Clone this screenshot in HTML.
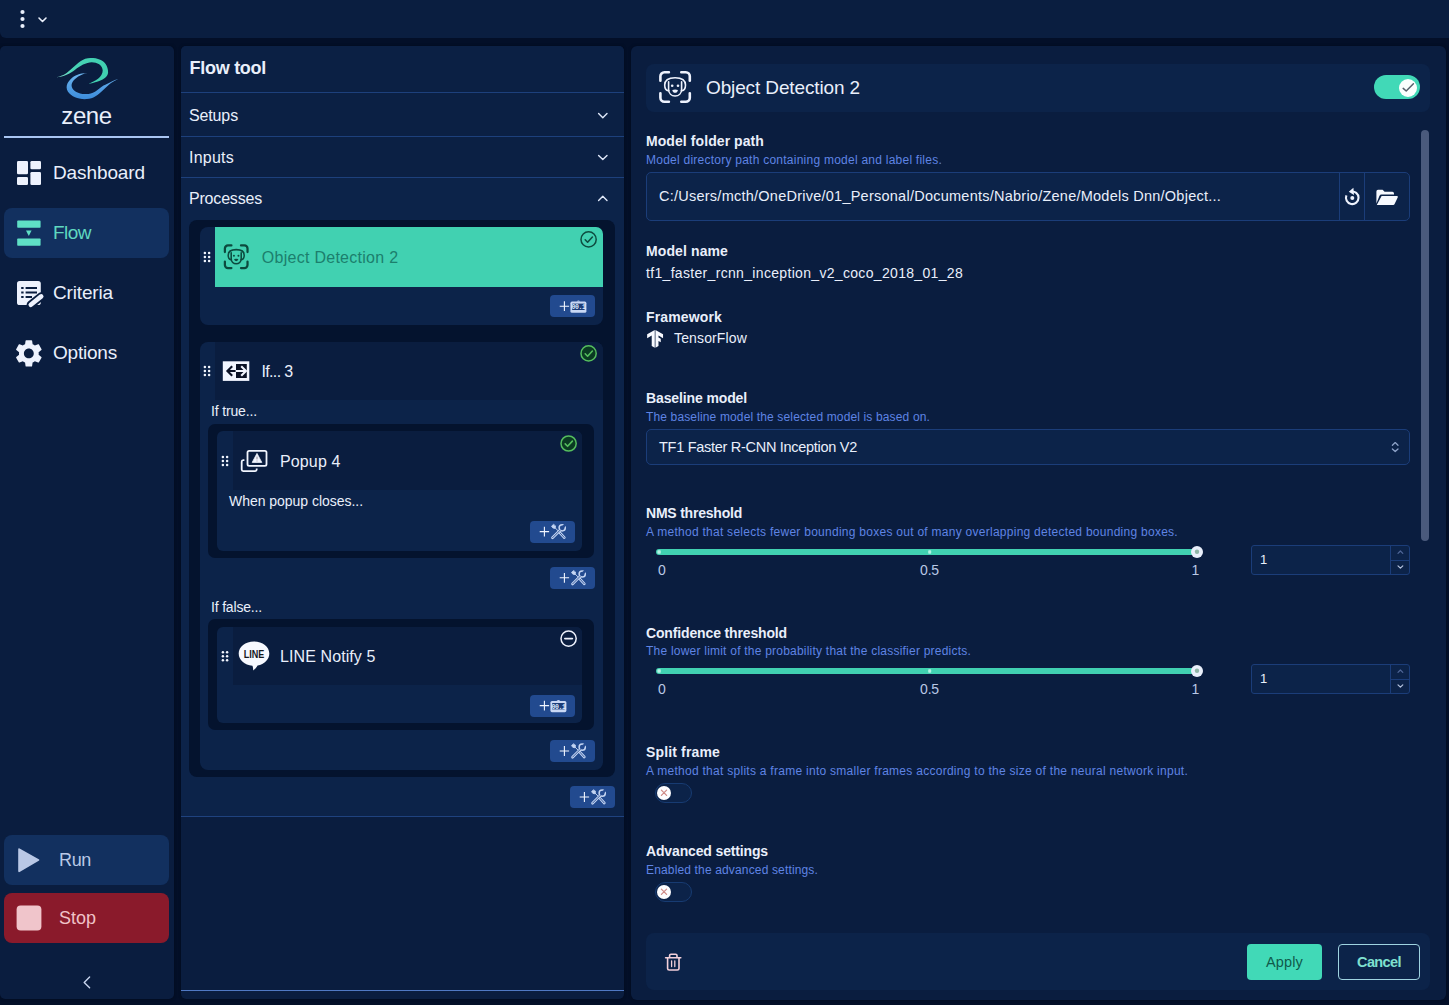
<!DOCTYPE html>
<html lang="en"><head><meta charset="utf-8"><title>Zene - Flow tool</title>
<style>
*{box-sizing:border-box;margin:0;padding:0}
html,body{width:1449px;height:1005px;overflow:hidden}
body{background:#030f28;font-family:"Liberation Sans",sans-serif;position:relative}
.b{position:absolute}
.t{position:absolute;white-space:nowrap}
svg{position:absolute;overflow:visible}
#zene{left:61.3px;top:101.2px;font-size:24px;line-height:29px;color:#e9effb;font-weight:400;letter-spacing:-0.387px}
#n1{left:53px;top:160.5px;font-size:19px;line-height:23px;color:#e9effb;font-weight:400;letter-spacing:-0.106px}
#n2{left:53px;top:220.5px;font-size:19px;line-height:23px;color:#5fd8c0;font-weight:400;letter-spacing:-0.531px}
#n3{left:53px;top:280.5px;font-size:19px;line-height:23px;color:#e9effb;font-weight:400;letter-spacing:-0.154px}
#n4{left:53px;top:340.5px;font-size:19px;line-height:23px;color:#e9effb;font-weight:400;letter-spacing:-0.212px}
#run{left:59px;top:849.0px;font-size:18px;line-height:22px;color:#b9c8e6;font-weight:400;letter-spacing:-0.344px}
#stop{left:59px;top:907.0px;font-size:18px;line-height:22px;color:#f0c3c8;font-weight:400;letter-spacing:-0.008px}
#ft{left:189.6px;top:56.8px;font-size:18px;line-height:22px;color:#e9effb;font-weight:700;letter-spacing:-0.287px}
#s1{left:189px;top:105.5px;font-size:16px;line-height:19px;color:#e9effb;font-weight:400;letter-spacing:-0.135px}
#s2{left:189px;top:147.5px;font-size:16px;line-height:19px;color:#e9effb;font-weight:400;letter-spacing:0.234px}
#s3{left:189px;top:188.5px;font-size:16px;line-height:19px;color:#e9effb;font-weight:400;letter-spacing:-0.189px}
#p1{left:261.8px;top:247.5px;font-size:16px;line-height:19px;color:#1c7f6d;font-weight:400;letter-spacing:0.271px}
#p2{left:261.5px;top:361.5px;font-size:16px;line-height:19px;color:#e9effb;font-weight:400;letter-spacing:-0.654px}
#p3{left:211px;top:402.5px;font-size:14px;line-height:17px;color:#e9effb;font-weight:400;letter-spacing:-0.147px}
#p4{left:280px;top:451.5px;font-size:16px;line-height:19px;color:#e9effb;font-weight:400;letter-spacing:0.127px}
#p5{left:229px;top:492.5px;font-size:14px;line-height:17px;color:#e9effb;font-weight:400;letter-spacing:-0.032px}
#p6{left:211px;top:598.5px;font-size:14px;line-height:17px;color:#e9effb;font-weight:400;letter-spacing:-0.175px}
#p7{left:280px;top:646.5px;font-size:16px;line-height:19px;color:#e9effb;font-weight:400;letter-spacing:0.095px}
#h1{left:706px;top:75.7px;font-size:19px;line-height:23px;color:#e9effb;font-weight:400;letter-spacing:-0.128px}
#l1{left:646px;top:132.5px;font-size:14px;line-height:17px;color:#e9effb;font-weight:700;letter-spacing:0.078px}
#d1{left:646px;top:152.8px;font-size:12px;line-height:14px;color:#5f84e4;font-weight:400;letter-spacing:0.244px}
#v1{left:659px;top:187.5px;font-size:14.5px;line-height:17px;color:#e9effb;font-weight:400;letter-spacing:0.245px}
#l2{left:646px;top:242.5px;font-size:14px;line-height:17px;color:#e9effb;font-weight:700;letter-spacing:0.109px}
#v2{left:646px;top:264.5px;font-size:14px;line-height:17px;color:#e9effb;font-weight:400;letter-spacing:0.323px}
#l3{left:646px;top:308.5px;font-size:14px;line-height:17px;color:#e9effb;font-weight:700;letter-spacing:0.144px}
#v3{left:674px;top:329.5px;font-size:14px;line-height:17px;color:#e9effb;font-weight:400;letter-spacing:0.141px}
#l4{left:646px;top:389.5px;font-size:14px;line-height:17px;color:#e9effb;font-weight:700;letter-spacing:-0.122px}
#d4{left:646px;top:409.8px;font-size:12px;line-height:14px;color:#5f84e4;font-weight:400;letter-spacing:0.143px}
#v4{left:659px;top:438.5px;font-size:14.5px;line-height:17px;color:#e9effb;font-weight:400;letter-spacing:-0.286px}
#l5{left:646px;top:504.5px;font-size:14px;line-height:17px;color:#e9effb;font-weight:700;letter-spacing:-0.214px}
#d5{left:646px;top:524.8px;font-size:12px;line-height:14px;color:#5f84e4;font-weight:400;letter-spacing:0.267px}
#t50{left:658px;top:561.5px;font-size:14px;line-height:17px;color:#b9c8e6;font-weight:400;letter-spacing:0.000px}
#t55{left:920px;top:561.5px;font-size:14px;line-height:17px;color:#b9c8e6;font-weight:400;letter-spacing:-0.156px}
#t51{left:1191.6px;top:561.5px;font-size:14px;line-height:17px;color:#b9c8e6;font-weight:400;letter-spacing:0.000px}
#n5{left:1260px;top:552.0px;font-size:13px;line-height:16px;color:#e9effb;font-weight:400;letter-spacing:0.000px}
#l6{left:646px;top:624.7px;font-size:14px;line-height:17px;color:#e9effb;font-weight:700;letter-spacing:-0.145px}
#d6{left:646px;top:643.8px;font-size:12px;line-height:14px;color:#5f84e4;font-weight:400;letter-spacing:0.222px}
#t60{left:658px;top:680.5px;font-size:14px;line-height:17px;color:#b9c8e6;font-weight:400;letter-spacing:0.000px}
#t65{left:920px;top:680.5px;font-size:14px;line-height:17px;color:#b9c8e6;font-weight:400;letter-spacing:-0.156px}
#t61{left:1191.6px;top:680.5px;font-size:14px;line-height:17px;color:#b9c8e6;font-weight:400;letter-spacing:0.000px}
#n6{left:1260px;top:671.0px;font-size:13px;line-height:16px;color:#e9effb;font-weight:400;letter-spacing:0.000px}
#l7{left:646px;top:743.5px;font-size:14px;line-height:17px;color:#e9effb;font-weight:700;letter-spacing:0.149px}
#d7{left:646px;top:763.8px;font-size:12px;line-height:14px;color:#5f84e4;font-weight:400;letter-spacing:0.274px}
#l8{left:646px;top:842.5px;font-size:14px;line-height:17px;color:#e9effb;font-weight:700;letter-spacing:-0.146px}
#d8{left:646px;top:862.8px;font-size:12px;line-height:14px;color:#5f84e4;font-weight:400;letter-spacing:0.151px}
#ap{left:1266px;top:953.5px;font-size:14.5px;line-height:17px;color:#105a4b;font-weight:400;letter-spacing:0.144px}
#ca{left:1357px;top:953.5px;font-size:14.5px;line-height:17px;color:#7fe0cf;font-weight:700;letter-spacing:-0.594px}
</style></head><body>
<!-- top bar -->
<div class="b" style="left:0;top:0;width:1449px;height:38px;background:#0a1e40;border-radius:0 0 0 6px"></div>
<svg style="left:18px;top:8px" width="34" height="24" viewBox="0 0 34 24"><g fill="#e9effb"><circle cx="4.5" cy="4" r="2.1"/><circle cx="4.5" cy="11" r="2.1"/><circle cx="4.5" cy="18" r="2.1"/></g><path d="M21 10 L24.5 13.5 L28 10" fill="none" stroke="#e9effb" stroke-width="1.6" stroke-linecap="round" stroke-linejoin="round"/></svg>

<!-- sidebar -->
<div class="b" style="left:0;top:46px;width:173.5px;height:953px;background:#0a1d3f;border-radius:5px;box-shadow:0 0 3px rgba(2,10,28,.9)"></div>
<div class="b" style="left:4px;top:136px;width:165px;height:2px;background:#a9c5f2"></div>
<div class="b" style="left:4px;top:208px;width:165px;height:50px;background:#12305f;border-radius:8px"></div>
<div class="b" style="left:4px;top:835px;width:165px;height:50px;background:#12305f;border-radius:8px"></div>
<div class="b" style="left:4px;top:893px;width:165px;height:50px;background:#8a1a2b;border-radius:8px"></div>

<!-- flow tool panel -->
<div class="b" style="left:181px;top:46px;width:442.5px;height:953px;background:#0a1d3f;border-radius:5px;box-shadow:0 0 3px rgba(2,10,28,.9)"></div>
<div class="b" style="left:181px;top:46px;width:442.5px;height:132px;background:#0b2044;border-radius:5px 5px 0 0"></div>
<div class="b" style="left:181px;top:92px;width:442.5px;height:1px;background:#1d407c"></div>
<div class="b" style="left:181px;top:136px;width:442.5px;height:1px;background:#1d407c"></div>
<div class="b" style="left:181px;top:177px;width:442.5px;height:1px;background:#1d407c"></div>
<div class="b" style="left:181px;top:178px;width:442.5px;height:638px;background:#0c2349"></div>
<div class="b" style="left:181px;top:816px;width:442.5px;height:1px;background:#1f427f"></div>
<div class="b" style="left:181px;top:990px;width:442.5px;height:1px;background:#5079c4"></div>
<!-- processes dark container -->
<div class="b" style="left:189px;top:220px;width:425.5px;height:557px;background:#04132e;border-radius:8px"></div>
<!-- card 1 -->
<div class="b" style="left:199.5px;top:227px;width:403.5px;height:98px;background:#0c2349;border-radius:8px"></div>
<div class="b" style="left:215px;top:227px;width:388px;height:60px;background:#41d1b1;border-radius:0 7px 0 0"></div>
<div class="b btn" style="left:550px;top:295px;width:45px;height:22px;background:#224a8f;border-radius:4px"></div>
<!-- card 2 (If) -->
<div class="b" style="left:199.5px;top:342px;width:403.5px;height:427.5px;background:#0c2349;border-radius:8px"></div>
<div class="b" style="left:215px;top:342px;width:388px;height:57.5px;background:#0a1d3f;border-radius:0 8px 0 0"></div>
<!-- if true container -->
<div class="b" style="left:208px;top:424px;width:386px;height:133.5px;background:#04132e;border-radius:7px"></div>
<div class="b" style="left:217px;top:431px;width:365px;height:120px;background:#0c2349;border-radius:6px"></div>
<div class="b" style="left:233px;top:431px;width:349px;height:59px;background:#0a1d3f;border-radius:0 6px 0 0"></div>
<div class="b btn" style="left:530px;top:521px;width:45px;height:22px;background:#224a8f;border-radius:4px"></div>
<div class="b btn" style="left:550px;top:567px;width:45px;height:22px;background:#224a8f;border-radius:4px"></div>
<!-- if false container -->
<div class="b" style="left:208px;top:619px;width:386px;height:111px;background:#04132e;border-radius:7px"></div>
<div class="b" style="left:217px;top:627px;width:365px;height:96px;background:#0c2349;border-radius:6px"></div>
<div class="b" style="left:233px;top:627px;width:349px;height:58px;background:#0a1d3f;border-radius:0 6px 0 0"></div>
<div class="b btn" style="left:530px;top:695px;width:45px;height:22px;background:#224a8f;border-radius:4px"></div>
<div class="b btn" style="left:550px;top:740px;width:45px;height:22px;background:#224a8f;border-radius:4px"></div>
<div class="b btn" style="left:570px;top:786px;width:45px;height:22px;background:#224a8f;border-radius:4px"></div>

<!-- right panel -->
<div class="b" style="left:631px;top:46px;width:814.5px;height:953.5px;background:#0a1d3f;border-radius:6px;box-shadow:0 0 3px rgba(2,10,28,.9)"></div>
<div class="b" style="left:646px;top:64px;width:784px;height:48px;background:#0c2349;border-radius:8px"></div>
<div class="b" style="left:646px;top:933px;width:784px;height:57px;background:#0c2349;border-radius:8px"></div>
<!-- scrollbar -->
<div class="b" style="left:1421px;top:129.5px;width:8px;height:411px;background:#4a5a7c;border-radius:4px"></div>
<!-- path input -->
<div class="b" style="left:646px;top:172px;width:764px;height:49px;background:#0c2349;border:1px solid #1b3d79;border-radius:5px"></div>
<div class="b" style="left:1339px;top:172px;width:1px;height:49px;background:#1b3d79"></div>
<div class="b" style="left:1364px;top:172px;width:1px;height:49px;background:#1b3d79"></div>
<!-- select -->
<div class="b" style="left:646px;top:429px;width:764px;height:36px;background:#0c2349;border:1px solid #1b3d79;border-radius:5px"></div>
<!-- sliders -->
<div class="b" style="left:656px;top:549px;width:541px;height:6px;background:#41d1b1;border-radius:3px"></div>
<div class="b" style="left:656px;top:668px;width:541px;height:6px;background:#41d1b1;border-radius:3px"></div>
<div class="b" style="left:1191px;top:546px;width:12px;height:12px;background:#e9effb;border-radius:6px"></div>
<div class="b" style="left:1191px;top:665px;width:12px;height:12px;background:#e9effb;border-radius:6px"></div>
<!-- number inputs -->
<div class="b" style="left:1251px;top:545px;width:159px;height:30px;background:#0c2349;border:1px solid #1b3d79;border-radius:3px"></div>
<div class="b" style="left:1251px;top:664px;width:159px;height:30px;background:#0c2349;border:1px solid #1b3d79;border-radius:3px"></div>
<!-- toggles -->
<div class="b" style="left:1374px;top:75px;width:46px;height:24px;background:#41d9b7;border-radius:12px"></div>
<div class="b" style="left:1399px;top:78.5px;width:18px;height:18px;background:#fbfffe;border-radius:9px"></div>
<div class="b" style="left:654.5px;top:783px;width:37.5px;height:20px;background:#0c2349;border:1px solid #173b72;border-radius:10px"></div>
<div class="b" style="left:656.8px;top:785.5px;width:14.4px;height:14.4px;background:#fdfdff;border-radius:8px"></div>
<div class="b" style="left:654.5px;top:882px;width:37.5px;height:20px;background:#0c2349;border:1px solid #173b72;border-radius:10px"></div>
<div class="b" style="left:656.8px;top:884.5px;width:14.4px;height:14.4px;background:#fdfdff;border-radius:8px"></div>
<!-- spinner dividers -->
<div class="b" style="left:1390px;top:545px;width:1px;height:30px;background:#1b3d79"></div>
<div class="b" style="left:1390px;top:559.5px;width:20px;height:1px;background:#1b3d79"></div>
<div class="b" style="left:1390px;top:664px;width:1px;height:30px;background:#1b3d79"></div>
<div class="b" style="left:1390px;top:678.5px;width:20px;height:1px;background:#1b3d79"></div>
<!-- buttons -->
<div class="b" style="left:1247px;top:944px;width:75px;height:36px;background:#41d9b7;border-radius:4px"></div>
<div class="b" style="left:1338px;top:944px;width:82px;height:36px;border:1px solid #9fd3e0;border-radius:4px"></div>
<svg width="1449" height="1005" viewBox="0 0 1449 1005" style="left:0;top:0">
<defs>
<linearGradient id="gt" x1="0" y1="0" x2="1" y2="0"><stop offset="0" stop-color="#8fe3d2"/><stop offset="0.35" stop-color="#48d3b5"/><stop offset="1" stop-color="#3fd0b0"/></linearGradient>
<linearGradient id="gb" x1="0" y1="0" x2="0" y2="1"><stop offset="0" stop-color="#6db5ee"/><stop offset="1" stop-color="#3c8cdb"/></linearGradient>
<!-- drag handle -->
<g id="drag" fill="#f2f6ff"><circle cx="-2.1" cy="-4" r="1.25"/><circle cx="2.1" cy="-4" r="1.25"/><circle cx="-2.1" cy="0" r="1.25"/><circle cx="2.1" cy="0" r="1.25"/><circle cx="-2.1" cy="4" r="1.25"/><circle cx="2.1" cy="4" r="1.25"/></g>
<!-- object detection icon: 32px box centered 0,0 -->
<g id="odb" fill="none" stroke-linecap="round" stroke-linejoin="round"><path d="M-14.7,-6.2V-10.7A4,4 0 0 1 -10.7,-14.7H-6.2"/><path d="M14.7,-6.2V-10.7A4,4 0 0 0 10.7,-14.7H6.2"/><path d="M-14.7,6.2V10.7A4,4 0 0 0 -10.7,14.7H-6.2"/><path d="M14.7,6.2V10.7A4,4 0 0 1 10.7,14.7H6.2"/></g>
<g id="odh" fill="none" stroke-linecap="round" stroke-linejoin="round"><path d="M-6.4,3.6C-9,4 -10.4,1.5 -10.4,-2C-10.4,-7 -6,-9.3 0,-9.3C6,-9.3 10.4,-7 10.4,-2C10.4,1.5 9,4 6.4,3.6"/><path d="M-6.5,-5.2V2.2C-6.5,6.5 -3.5,9 0,9C3.5,9 6.5,6.5 6.5,2.2V-5.2"/></g>
<g id="odf"><circle cx="-2.9" cy="-1.3" r="1.3"/><circle cx="2.9" cy="-1.3" r="1.3"/><path d="M-2.8,2.9Q0,2 2.8,2.9Q2.4,5.7 0,5.7Q-2.4,5.7 -2.8,2.9Z"/></g>
<!-- plus -->
<path id="plus" d="M-4.7,0H4.7M0,-4.9V4.9" stroke="#f2f6ff" stroke-width="1.1" fill="none"/>
<!-- tools icon 16x16 centered -->
<g id="tools" fill="none" stroke="#c5d5f3" stroke-linecap="round" stroke-linejoin="round">
<path d="M0.6,0.6L5.6,6" stroke-width="2.7"/>
<path d="M0.9,0.9L5.5,5.9" stroke="#244b91" stroke-width="0.9"/>
<path d="M-0.6,-0.8L-4.2,-4.4" stroke-width="1"/>
<path d="M-5.4,-7L-7.2,-5.4L-5.8,-3.6L-3.6,-3.2L-3.2,-5.4Z" stroke-width="0.8" fill="#c5d5f3"/>
<path d="M-6.2,6.2L1.4,-1.4" stroke-width="2.7"/>
<circle cx="3.5" cy="-3.8" r="3.1" stroke-width="1.5" fill="#244b91"/>
<path d="M-6.1,6.1L1.6,-1.6" stroke="#244b91" stroke-width="0.9"/>
<path d="M3.9,-4.2L7.4,-7.7" stroke="#244b91" stroke-width="2.6" stroke-linecap="butt"/>
</g>
<!-- counter icon -->
<g id="cnt"><path d="M-1.8,-5.6Q0,-7.6 1.8,-5.6Z" fill="#c9d8f5"/><rect x="-8" y="-5.6" width="16" height="11.2" rx="1.6" fill="#c9d8f5"/><rect x="-6.2" y="-3.6" width="12.4" height="6.4" fill="#1b3c78"/><text x="0" y="2" font-family="Liberation Mono, monospace" font-size="6.5" font-weight="700" fill="#dfe8fb" text-anchor="middle" letter-spacing="-0.4">00.1</text></g>
<!-- check circle -->
<g id="ok" fill="none" stroke-linecap="round" stroke-linejoin="round"><circle r="7.6" stroke-width="1.5"/><path d="M-3.4,0.4L-1,2.8L3.8,-2.4" stroke-width="1.6"/></g>
</defs>

<!-- logo -->
<path d="M55.9,77.3C60,76.5 63,75 65.1,73.9C69,71.5 75,65 80.1,61.4C83.5,59 87,57.9 90.5,57.9C94,57.9 97.5,58.3 100.2,59.7C104.5,61.5 108.2,66 108.1,72.2C108,77 103,80 95.1,82.3C93,83 91,83.5 88.5,83.8C95,81.5 102.7,77 102.7,70.6C102.7,65 97,62.2 91.8,62.2C86,62.2 80,66 75.1,69.7C70,73.5 64,76.8 55.9,77.3Z" fill="url(#gt)"/>
<path d="M87.6,73.1C83,73.2 80,73.8 77.6,74.7C74,76 71.5,78 70.1,79.7C68,82 66.6,84.5 66.6,87.3C66.6,90.5 68.5,93 70.9,94.8C73.5,97 76.5,98 79.3,98.5C81.5,99 84,99.3 86.8,99.1C90,98.9 93,97.8 95.1,96.5C98.5,94.6 101,92 103.5,89.8C106,87.6 108.5,85 111,83.1C113.5,81.3 116,80 118.5,79.1C116,79.6 113.8,80.4 111.8,81.4C108.5,83 106,84.2 103.5,85.6C101,87.3 99,89.2 96.8,90.6C94.5,92.3 91.5,93.6 88.5,93.9C85.5,94.2 82.5,94.2 80.1,93.5C77.5,92.8 75,91.6 73.4,89.8C72,88.3 71.5,86.6 71.6,84.8C71.8,82.5 73.2,80.6 75.1,78.9C77,77.2 79.2,75.8 81.8,74.7C83.8,73.9 85.6,73.4 87.6,73.1Z" fill="url(#gb)"/>

<!-- nav icons -->
<g fill="#eef2fd"><rect x="17" y="161" width="11" height="13.2" rx="1.3"/><rect x="17" y="177" width="11" height="8" rx="1.3"/><rect x="30.4" y="161" width="10.6" height="8.2" rx="1.3"/><rect x="30.4" y="172" width="10.6" height="13" rx="1.3"/></g>
<g fill="#5fe0c5"><rect x="17.2" y="220.6" width="23.4" height="7.2" rx="0.8"/><rect x="17.2" y="238.4" width="23.4" height="7.4" rx="0.8"/><path d="M26,230.6H31.6L28.8,236Z"/></g>
<!-- criteria -->
<g><rect x="17" y="281" width="23.8" height="24" rx="2.6" fill="#eef2fd"/>
<g stroke="#0a1d3f" stroke-width="2.2" fill="none"><path d="M21.2,288H23.6M25.6,288H37M21.2,292.5H23.6M25.6,292.5H37M21.2,297H23.6M25.6,297H32"/></g>
<path d="M30.8,304.8L41.2,296.4" stroke="#0a1d3f" stroke-width="8.4" stroke-linecap="round"/>
<path d="M30.8,304.8L41.2,296.4" stroke="#eef2fd" stroke-width="4.6" stroke-linecap="round"/></g>
<!-- gear -->
<g transform="translate(12.4,337) scale(1.37)" fill="#eef2fd"><path d="M19.14 12.94c.04-.3.06-.61.06-.94 0-.32-.02-.64-.07-.94l2.03-1.58c.18-.14.23-.41.12-.61l-1.92-3.32c-.12-.22-.37-.29-.59-.22l-2.39.96c-.5-.38-1.03-.7-1.62-.94l-.36-2.54c-.04-.24-.24-.41-.48-.41h-3.84c-.24 0-.43.17-.47.41l-.36 2.54c-.59.24-1.13.57-1.62.94l-2.39-.96c-.22-.08-.47 0-.59.22L2.74 8.87c-.12.21-.08.47.12.61l2.03 1.58c-.05.3-.09.63-.09.94s.02.64.07.94l-2.03 1.58c-.18.14-.23.41-.12.61l1.92 3.32c.12.22.37.29.59.22l2.39-.96c.5.38 1.03.7 1.62.94l.36 2.54c.05.24.24.41.48.41h3.84c.24 0 .44-.17.47-.41l.36-2.54c.59-.24 1.13-.56 1.62-.94l2.39.96c.22.08.47 0 .59-.22l1.92-3.32c.12-.22.07-.47-.12-.61l-2.01-1.58zM12 15.6c-1.98 0-3.6-1.62-3.6-3.6s1.62-3.6 3.6-3.6 3.6 1.62 3.6 3.6-1.62 3.6-3.6 3.6z"/></g>
<!-- run / stop / collapse -->
<path d="M19.6,848.4L38.8,859.2Q40.2,860 38.8,860.8L19.6,872Q18.2,872.6 18.2,871V849.4Q18.2,847.8 19.6,848.4Z" fill="#b9c8e6"/>
<rect x="16.6" y="905.6" width="24.8" height="25" rx="4" fill="#f0c5cb"/>
<path d="M89.6,977L84.2,982.4L89.6,987.8" fill="none" stroke="#c9d5ee" stroke-width="1.4" stroke-linecap="round" stroke-linejoin="round"/>

<!-- section chevrons -->
<g fill="none" stroke="#dfe7f8" stroke-width="1.4" stroke-linecap="round" stroke-linejoin="round"><path d="M598.6,113.6L602.8,117.8L607,113.6"/><path d="M598.6,155.4L602.8,159.6L607,155.4"/><path d="M598.6,200.4L602.8,196.2L607,200.4"/></g>

<!-- process rows -->
<use href="#drag" x="207" y="257"/>
<g transform="translate(236.2,256.8) scale(0.77)" stroke="#0c4a3e" fill="#0c4a3e"><use href="#odb" stroke-width="2.9"/><use href="#odh" stroke-width="2"/><use href="#odf" stroke="none"/></g>
<g transform="translate(588.6,239.4)" stroke="#0e4d41"><use href="#ok"/></g>
<use href="#plus" x="564.4" y="306.2"/><use href="#cnt" x="578.4" y="307.2"/>

<use href="#drag" x="207" y="371"/>
<g><rect x="222.8" y="361.3" width="26.5" height="19.6" fill="#f2f6ff"/><rect x="236" y="364" width="10.8" height="14" fill="#0b1226"/>
<path d="M236.4,371H228M232.2,366.2L227.4,371L232.2,375.8" fill="none" stroke="#0b1226" stroke-width="2.1"/>
<path d="M235.6,371H245.6M241.2,366.2L246,371L241.2,375.8" fill="none" stroke="#f2f6ff" stroke-width="2.1"/></g>
<g transform="translate(588.6,353.4)" stroke="#55bd5e"><circle r="7.6" fill="#0a3a22" stroke="none"/><use href="#ok"/></g>

<use href="#drag" x="225" y="461"/>
<g fill="none" stroke="#f2f6ff" stroke-width="1.8" stroke-linejoin="round"><rect x="247.5" y="450.8" width="19" height="15" rx="1.6"/><path d="M244.4,460.2H243.2Q241.7,460.2 241.7,461.8V469.6Q241.7,471.1 243.2,471.1H255.2Q256.7,471.1 256.7,469.6V468.6"/></g>
<path d="M257,453.4L261.8,462.4H252.2Z" fill="#f2f6ff" stroke="#f2f6ff" stroke-width="0.8" stroke-linejoin="round"/><path d="M257,456.6V459.4M257,460.6V461.4" stroke="#8a7f8a" stroke-width="0.9"/>
<g transform="translate(568.6,443.5)" stroke="#55bd5e"><circle r="7.6" fill="#0a3a22" stroke="none"/><use href="#ok"/></g>
<use href="#plus" x="544.4" y="531.6"/><use href="#tools" x="558.7" y="531.6"/>
<use href="#plus" x="564.4" y="577.8"/><use href="#tools" x="578.7" y="577.8"/>

<use href="#drag" x="225" y="656.2"/>
<g><path d="M254,641.4C262.6,641.4 269.3,646.6 269.3,653.6C269.3,659.4 264.4,664.4 257.6,665.6C256.4,667.6 254.6,669.6 253.2,670.6C253.2,669 253,667 252.4,665.8C244.6,665.2 238.7,660.2 238.7,653.6C238.7,646.6 245.4,641.4 254,641.4Z" fill="#f7f9ff"/>
<text x="243.8" y="657.8" font-family="Liberation Sans, sans-serif" font-size="11" font-weight="700" fill="#16181d" textLength="20.6" lengthAdjust="spacingAndGlyphs">LINE</text></g>
<g transform="translate(568.6,638.6)" stroke="#eef2fd"><circle r="7.6" fill="none" stroke-width="1.5"/><path d="M-3.8,0H3.8" stroke-width="1.6" stroke-linecap="round"/></g>
<use href="#plus" x="544.4" y="705.6"/><use href="#cnt" x="558.4" y="706.6"/>
<use href="#plus" x="564.4" y="751"/><use href="#tools" x="578.7" y="751"/>
<use href="#plus" x="584.4" y="797"/><use href="#tools" x="598.7" y="797"/>

<!-- header icon -->
<g transform="translate(675.1,87)" stroke="#eef2fd" fill="#eef2fd"><use href="#odb" stroke-width="2.6"/><use href="#odh" stroke-width="1.6"/><use href="#odf" stroke="none"/></g>
<!-- toggle check -->
<path d="M1403.2,88.4L1406.2,91L1413.4,83.8" fill="none" stroke="#56606b" stroke-width="1.5" stroke-linecap="round" stroke-linejoin="round"/>
<!-- refresh -->
<g fill="none" stroke="#eef2fd" stroke-width="2.1"><path d="M1351,191.6A6.3,6.3 0 1 1 1346.4,195.4"/></g>
<path d="M1353.4,187.8L1348.8,191.8L1354,195Z" fill="#eef2fd"/><circle cx="1352.3" cy="197.9" r="2" fill="#eef2fd"/>
<!-- folder -->
<path d="M1376.4,203.6V191.4Q1376.4,189.8 1378,189.8H1382.6L1384.6,191.8H1392.4Q1394,191.8 1394,193.4V194.6H1381.4Q1380,194.6 1379.4,196Z" fill="#f7f9ff"/>
<path d="M1381.6,196H1396.8Q1398.4,196 1397.7,197.4L1394.6,204Q1394.2,204.9 1393.2,204.9H1376.8Z" fill="#f7f9ff"/>
<!-- TF -->
<g transform="translate(646.2,329.9) scale(0.742)" fill="#f7f9ff"><path d="M1.292 5.856L11.54 0v24l-4.095-2.378V7.603l-6.168 3.564.015-5.31zm21.43 5.311l-.014-5.31L12.46 0v24l4.095-2.378V14.87l3.092 1.788-.018-4.618-3.074-1.756V7.603l6.168 3.564z"/></g>
<!-- select arrows -->
<g fill="none" stroke="#8ea3c9" stroke-width="1.3" stroke-linecap="round" stroke-linejoin="round"><path d="M1392.4,445.2L1395.2,442.6L1398,445.2"/><path d="M1392.4,449L1395.2,451.6L1398,449"/></g>
<!-- slider ticks & handles -->
<g fill="#b4f2e3"><rect x="657.4" y="550.2" width="3.4" height="3.6" rx="0.8"/><rect x="928.2" y="550.2" width="3" height="3.6" rx="0.8"/><rect x="657.4" y="669.2" width="3.4" height="3.6" rx="0.8"/><rect x="928.2" y="669.2" width="3" height="3.6" rx="0.8"/></g>
<circle cx="1197" cy="551.8" r="2.2" fill="#8fb5a6"/><circle cx="1197" cy="670.8" r="2.2" fill="#8fb5a6"/>
<!-- spinners -->
<g fill="none" stroke-width="1.2" stroke-linecap="round" stroke-linejoin="round"><path d="M1398,553.4L1400.4,551L1402.8,553.4" stroke="#4f6697"/><path d="M1398,565.8L1400.4,568.2L1402.8,565.8" stroke="#b7c4e0"/><path d="M1398,672.4L1400.4,670L1402.8,672.4" stroke="#4f6697"/><path d="M1398,684.8L1400.4,687.2L1402.8,684.8" stroke="#b7c4e0"/></g>
<!-- toggle X -->
<g stroke="#cf8a86" stroke-width="1.2" stroke-linecap="round"><path d="M661.4,790.1L666.6,795.3M666.6,790.1L661.4,795.3"/><path d="M661.4,889.1L666.6,894.3M666.6,889.1L661.4,894.3"/></g>
<!-- trash -->
<g fill="none" stroke="#f3d0da" stroke-width="1.6" stroke-linecap="round" stroke-linejoin="round"><path d="M665.6,957.8H680.8"/><path d="M669.6,957.4V955.6Q669.6,954.2 671,954.2H675.6Q677,954.2 677,955.6V957.4"/><path d="M667.6,958V968.4Q667.6,970 669.2,970H677.4Q679,970 679,968.4V958"/><path d="M671.6,960.8V966.6M674.8,960.8V966.6" stroke-width="1.3"/></g>
</svg>

<span class="t" id="zene">zene</span>
<span class="t" id="n1">Dashboard</span>
<span class="t" id="n2">Flow</span>
<span class="t" id="n3">Criteria</span>
<span class="t" id="n4">Options</span>
<span class="t" id="run">Run</span>
<span class="t" id="stop">Stop</span>
<span class="t" id="ft">Flow tool</span>
<span class="t" id="s1">Setups</span>
<span class="t" id="s2">Inputs</span>
<span class="t" id="s3">Processes</span>
<span class="t" id="p1">Object Detection 2</span>
<span class="t" id="p2">If... 3</span>
<span class="t" id="p3">If true...</span>
<span class="t" id="p4">Popup 4</span>
<span class="t" id="p5">When popup closes...</span>
<span class="t" id="p6">If false...</span>
<span class="t" id="p7">LINE Notify 5</span>
<span class="t" id="h1">Object Detection 2</span>
<span class="t" id="l1">Model folder path</span>
<span class="t" id="d1">Model directory path containing model and label files.</span>
<span class="t" id="v1">C:/Users/mcth/OneDrive/01_Personal/Documents/Nabrio/Zene/Models Dnn/Object...</span>
<span class="t" id="l2">Model name</span>
<span class="t" id="v2">tf1_faster_rcnn_inception_v2_coco_2018_01_28</span>
<span class="t" id="l3">Framework</span>
<span class="t" id="v3">TensorFlow</span>
<span class="t" id="l4">Baseline model</span>
<span class="t" id="d4">The baseline model the selected model is based on.</span>
<span class="t" id="v4">TF1 Faster R-CNN Inception V2</span>
<span class="t" id="l5">NMS threshold</span>
<span class="t" id="d5">A method that selects fewer bounding boxes out of many overlapping detected bounding boxes.</span>
<span class="t" id="t50">0</span>
<span class="t" id="t55">0.5</span>
<span class="t" id="t51">1</span>
<span class="t" id="n5">1</span>
<span class="t" id="l6">Confidence threshold</span>
<span class="t" id="d6">The lower limit of the probability that the classifier predicts.</span>
<span class="t" id="t60">0</span>
<span class="t" id="t65">0.5</span>
<span class="t" id="t61">1</span>
<span class="t" id="n6">1</span>
<span class="t" id="l7">Split frame</span>
<span class="t" id="d7">A method that splits a frame into smaller frames according to the size of the neural network input.</span>
<span class="t" id="l8">Advanced settings</span>
<span class="t" id="d8">Enabled the advanced settings.</span>
<span class="t" id="ap">Apply</span>
<span class="t" id="ca">Cancel</span>
</body></html>
